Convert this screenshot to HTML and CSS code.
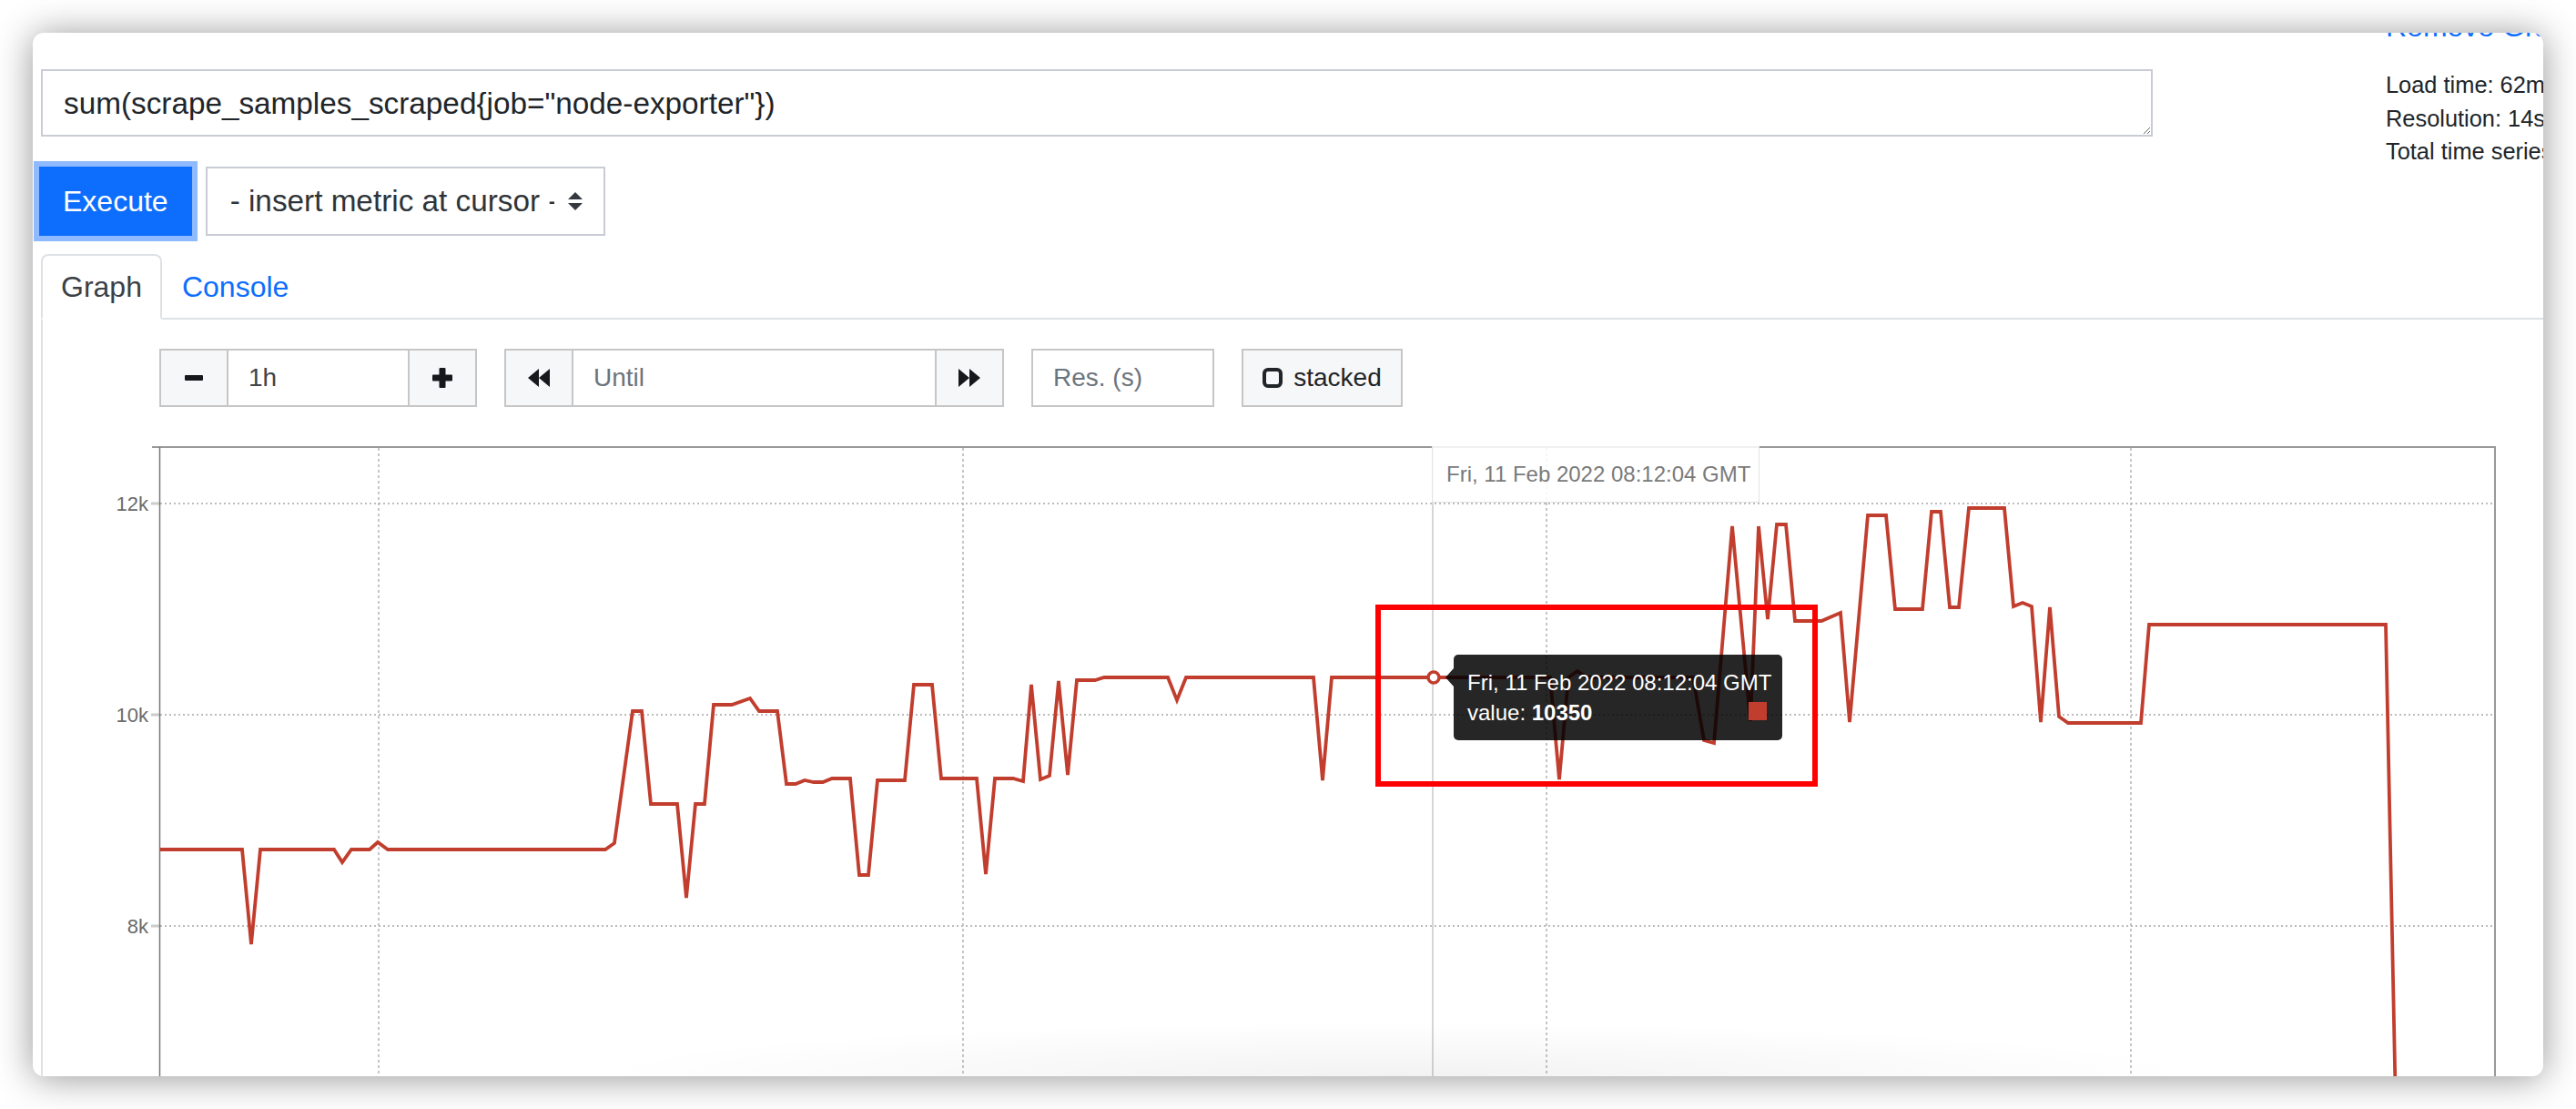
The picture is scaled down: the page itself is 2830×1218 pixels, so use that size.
FILE: index.html
```html
<!DOCTYPE html>
<html>
<head>
<meta charset="utf-8">
<title>Prometheus graph</title>
<link rel="stylesheet" href="styles.css">
</head>
<body>
<div class="window">
  <div class="content">
    <div class="top-row">
      <div class="query-col">
        <textarea class="expr" rows="1" spellcheck="false">sum(scrape_samples_scraped{job="node-exporter"})</textarea>
        <div class="exec-row">
          <button class="btn-execute">Execute</button>
          <div class="metric-select">
            <span class="sel-text">- insert metric at cursor -</span>
            <svg class="sel-arrows" width="18" height="20" viewBox="0 0 18 20"><path d="M9 0 L17 8 H1 Z M9 20 L1 12 H17 Z"/></svg>
          </div>
        </div>
      </div>
      <div class="stats-col">
        <div class="remove-link">Remove Graph</div>
        <div class="stats">
          <div>Load time: 62ms</div>
          <div>Resolution: 14s</div>
          <div>Total time series: 1</div>
        </div>
      </div>
    </div>

    <ul class="tabs">
      <li class="tab active">Graph</li>
      <li class="tab link">Console</li>
    </ul>

    <div class="tab-content">
      <div class="controls">
        <div class="group">
          <div class="gbtn w76"><svg width="20" height="6" viewBox="0 0 20 6"><rect width="20" height="6" rx="1"/></svg></div>
          <div class="ginput w200">1h</div>
          <div class="gbtn w76"><svg width="22" height="22" viewBox="0 0 22 22"><path d="M7.5 1 Q7.5 0 8.5 0 H13.5 Q14.5 0 14.5 1 V7.5 H21 Q22 7.5 22 8.5 V13.5 Q22 14.5 21 14.5 H14.5 V21 Q14.5 22 13.5 22 H8.5 Q7.5 22 7.5 21 V14.5 H1 Q0 14.5 0 13.5 V8.5 Q0 7.5 1 7.5 H7.5 Z"/></svg></div>
        </div>
        <div class="group">
          <div class="gbtn w76"><svg width="24" height="20" viewBox="0 0 24 20"><path d="M12 0 L12 20 L0 10 Z M24 0 L24 20 L12 10 Z"/></svg></div>
          <div class="ginput w400 placeholder">Until</div>
          <div class="gbtn w76"><svg width="24" height="20" viewBox="0 0 24 20"><path d="M0 0 L0 20 L12 10 Z M12 0 L12 20 L24 10 Z"/></svg></div>
        </div>
        <div class="ginput single w200 placeholder">Res. (s)</div>
        <div class="gbtn single stacked"><svg width="22" height="22" viewBox="0 0 22 22"><rect x="2" y="2" width="18" height="18" rx="4" fill="none" stroke="#212529" stroke-width="4"/></svg><span>stacked</span></div>
      </div>

      <div class="graph">
        <svg class="plot" width="2760" height="720" viewBox="47 480 2760 720">
          <g stroke="#bcbcbc" stroke-width="2" stroke-dasharray="2 3">
            <line x1="176" y1="553" x2="2740" y2="553"/>
            <line x1="176" y1="785" x2="2740" y2="785"/>
            <line x1="176" y1="1017" x2="2740" y2="1017"/>
          </g>
          <g stroke="#b4b4b4" stroke-width="1.5" stroke-dasharray="3 3">
            <line x1="416" y1="492" x2="416" y2="1200"/>
            <line x1="1058" y1="492" x2="1058" y2="1200"/>
            <line x1="1699" y1="492" x2="1699" y2="1200"/>
            <line x1="2341" y1="492" x2="2341" y2="1200"/>
          </g>
          <line x1="1574" y1="492" x2="1574" y2="1200" stroke="#d6d6d6" stroke-width="2"/>
          <g stroke="#cccccc" stroke-width="3">
            <line x1="166" y1="553" x2="175" y2="553"/>
            <line x1="166" y1="785" x2="175" y2="785"/>
            <line x1="166" y1="1017" x2="175" y2="1017"/>
          </g>
          <line x1="167" y1="491" x2="2742" y2="491" stroke="#999" stroke-width="2"/>
          <line x1="2741" y1="491" x2="2741" y2="1200" stroke="#999" stroke-width="2"/>
          <line x1="175.5" y1="491" x2="175.5" y2="1200" stroke="#777" stroke-width="1.5"/>
          <g class="ylab" fill="#6b6b6b" font-size="22" text-anchor="end">
            <text x="163" y="561">12k</text>
            <text x="163" y="793">10k</text>
            <text x="163" y="1025">8k</text>
          </g>
          <polyline fill="none" stroke="#c13e2e" stroke-width="3.8" stroke-linejoin="miter" stroke-miterlimit="10"
            points="176,933 266,933 276,1037 286,933 367,933 376,947 386,933 406,933 415,925 426,933 665,933 675,926 695,781 705,781 715,883 744,883 754,986 764,883 774,883 784,774 804,774 824,767 834,781 854,781 864,861 874,861 884,857 894,859 904,859 914,855 934,855 944,961 954,961 964,857 994,857 1004,752 1024,752 1034,855 1073,855 1083,960 1093,855 1113,855 1124,858 1133,752 1143,856 1153,852 1163,748 1173,851 1183,747 1203,747 1213,744 1283,744 1293,769 1303,744 1443,744 1453,857 1463,744 1703,744 1713,856 1723,744 1733,737 1743,744 1860,744 1872,813 1883,816 1903,578 1923,792 1932,578 1942,680 1952,576 1962,576 1972,682 2001,682 2022,673 2032,793 2052,566 2072,566 2082,669 2112,669 2122,562 2132,562 2142,667 2152,667 2163,558 2202,558 2212,666 2222,662 2232,666 2242,793 2252,667 2262,787 2272,794 2352,794 2361,686 2621,686 2632,1220"/>
          <circle cx="1575" cy="744" r="6" fill="#fff" stroke="#c13e2e" stroke-width="3.5"/>
        </svg>
        <div class="hover-label">Fri, 11 Feb 2022 08:12:04 GMT</div>
        <div class="annot"></div>
        <div class="tooltip">
          <div class="tt-line">Fri, 11 Feb 2022 08:12:04 GMT</div>
          <div class="tt-line tt-value"><span>value: <b>10350</b></span><i class="swatch"></i></div>
        </div>
      </div>
    </div>
  </div>
  <div class="bottom-shade"></div>
</div>
</body>
</html>
```

FILE: styles.css
```css
* { box-sizing: border-box; }

html, body {
  margin: 0;
  padding: 0;
  background: #ffffff;
  overflow: hidden;
}

body {
  width: 2830px;
  height: 1218px;
  padding: 36px 0 0 36px;
  font-family: "Liberation Sans", Arial, sans-serif;
  color: #212529;
}

.window {
  position: relative;
  width: 2758px;
  height: 1146px;
  background: #fff;
  border-radius: 12px;
  overflow: hidden;
  box-shadow: 0 2px 40px rgba(0, 0, 0, 0.42);
}

.content {
  padding: 40px 0 0 9px;
}

.top-row {
  display: flex;
  align-items: flex-start;
}

.query-col {
  width: 2320px;
  flex-shrink: 0;
}

.expr {
  display: block;
  width: 2320px;
  height: 74px;
  margin: 0;
  padding: 12px 23px;
  border: 2px solid #c9ccd5;
  border-radius: 0;
  font-family: "Liberation Sans", Arial, sans-serif;
  font-size: 33.3px;
  line-height: 48px;
  color: #212529;
  resize: vertical;
  overflow: hidden;
  outline: none;
}

.exec-row {
  display: flex;
  gap: 15px;
  margin-top: 33px;
  margin-left: -2px;
}

.btn-execute {
  height: 76px;
  padding: 0 24px;
  border: 2px solid #0d6efd;
  background: #0d6efd;
  color: #fff;
  font-family: "Liberation Sans", Arial, sans-serif;
  font-size: 32px;
  line-height: 48px;
  border-radius: 0;
  box-shadow: 0 0 0 6px #8fbaff;
}

.metric-select {
  width: 439px;
  height: 76px;
  border: 2px solid #c9ccd5;
  display: flex;
  align-items: center;
  padding-left: 25px;
  padding-right: 23px;
  font-size: 33.3px;
  color: #2f3438;
}

.sel-text {
  width: 356px;
  white-space: nowrap;
  overflow: hidden;
  flex-shrink: 0;
}

.sel-arrows {
  margin-left: 14px;
  fill: #343a40;
  flex-shrink: 0;
}

.stats-col {
  margin-left: 256px;
  margin-top: -71px;
  flex-shrink: 0;
  white-space: nowrap;
}

.remove-link {
  font-size: 32px;
  line-height: 48px;
  color: #0d6efd;
}

.stats {
  margin-top: 22px;
  font-size: 25.4px;
  line-height: 36.5px;
  color: #212529;
}

.tabs {
  list-style: none;
  margin: 20px 0 0 0;
  padding: 0;
  display: flex;
  border-bottom: 2px solid #dee2e6;
}

.tab {
  padding: 10px 20px;
  border: 2px solid transparent;
  border-radius: 8px 8px 0 0;
  font-size: 32px;
  line-height: 48px;
  margin-bottom: -2px;
}

.tab.active {
  border-color: #dee2e6 #dee2e6 #fff;
  color: #3b4046;
  background: #fff;
}

.tab.link {
  color: #0d6efd;
}

.tab-content {
  border-left: 2px solid #dee2e6;
  height: 900px;
}

.controls {
  display: flex;
  gap: 30px;
  padding: 32px 0 0 128px;
}

.group {
  display: flex;
}

.group > * + * {
  margin-left: -2px;
}

.gbtn, .ginput {
  height: 64px;
  border: 2px solid #c6c6c6;
  display: flex;
  align-items: center;
  font-size: 28px;
}

.gbtn {
  justify-content: center;
  background: #f6f7f8;
  fill: #16191c;
}

.ginput {
  background: #fff;
  padding: 0 22px;
  color: #3e4449;
}

.ginput.placeholder {
  color: #6c757d;
}

.w76 { width: 76px; }
.w200 { width: 201px; }
.w400 { width: 401px; }

.stacked {
  width: 177px;
  gap: 12px;
  color: #212529;
}

.graph {
  position: relative;
  margin-top: 33px;
  height: 720px;
}

.plot {
  display: block;
}

.ylab {
  font-family: "Liberation Sans", Arial, sans-serif;
}

.hover-label {
  position: absolute;
  left: 1526px;
  top: 10px;
  width: 360px;
  height: 62px;
  padding-left: 15px;
  font-size: 24px;
  line-height: 62px;
  color: #7a7a7a;
  background: rgba(255, 255, 255, 0.85);
  border: 1px solid #e4e4e4;
  border-top: none;
  white-space: nowrap;
}

.annot {
  position: absolute;
  left: 1464px;
  top: 184px;
  width: 486px;
  height: 200px;
  border: 6px solid #ff0000;
}

.tooltip {
  position: absolute;
  left: 1550px;
  top: 239px;
  width: 361px;
  padding: 14px 14px 14px 15px;
  background: rgba(0, 0, 0, 0.85);
  border-radius: 5px;
  color: #fff;
  font-size: 24px;
  line-height: 33px;
  white-space: nowrap;
}

.tooltip::before {
  content: "";
  position: absolute;
  left: -9px;
  top: 15px;
  border-top: 10px solid transparent;
  border-bottom: 10px solid transparent;
  border-right: 9px solid rgba(0, 0, 0, 0.85);
}

.tt-value {
  display: flex;
  justify-content: space-between;
  align-items: center;
}

.swatch {
  display: block;
  width: 20px;
  height: 20px;
  margin-right: 3px;
  margin-top: -4px;
  background: #c13e2e;
}

.bottom-shade {
  position: absolute;
  left: 600px;
  bottom: 0;
  width: 1800px;
  height: 60px;
  background: radial-gradient(ellipse at 50% 100%, rgba(0, 0, 0, 0.05), rgba(0, 0, 0, 0) 70%);
  pointer-events: none;
}
```
